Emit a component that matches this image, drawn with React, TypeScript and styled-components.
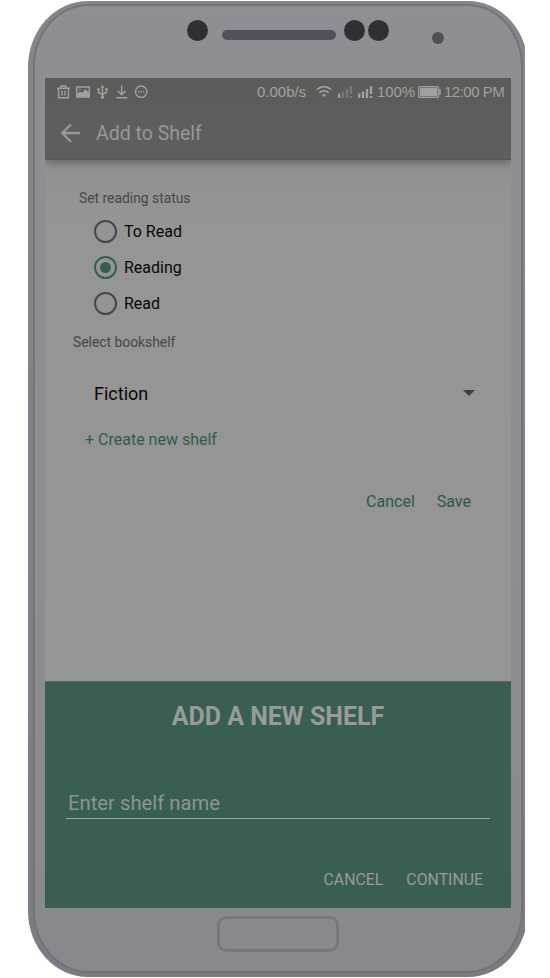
import React, { useState } from "react";
import styled, { createGlobalStyle } from "styled-components";

const GlobalStyle = createGlobalStyle`
  * {
    box-sizing: border-box;
  }

  body {
    margin: 0;
    background-color: #ffffff;
    font-family: Roboto, sans-serif;
  }

  button {
    border: 0;
    padding: 0;
    background: none;
    font-family: inherit;
    cursor: pointer;
  }
`;

const Stage = styled.main`
  height: 978px;
  width: 525px;
  padding: 1px 0 1px 28px;
  overflow: hidden;
`;

const Phone = styled.div`
  width: 500px;
  height: 976px;
  padding: 3px 5px 4px;
  border-radius: 60px / 66px;
  background: linear-gradient(#85868a, #818289 50%, #7b7c83);
`;

const Face = styled.div`
  display: flex;
  flex-direction: column;
  height: 969px;
  padding: 0 10px;
  border: 2px solid #737479;
  border-radius: 56px / 62px;
  background: linear-gradient(#8e8f94, #8d8e94 50%, #88898d);
`;

const Hardware = styled.div`
  display: flex;
  height: 72px;
  padding: 14px 0 0 142px;
`;

const Lens = styled.span<{ $gap?: number }>`
  width: 21px;
  height: 21px;
  margin-left: ${(props) => props.$gap || 0}px;
  border-radius: 50%;
  background-color: #2f3036;
`;

const Speaker = styled.span`
  width: 114px;
  height: 10px;
  margin: 10px 0 0 14px;
  border-radius: 5px;
  background-color: #50515a;
`;

const Sensor = styled.span`
  width: 12px;
  height: 12px;
  margin: 12px 0 0 43px;
  border-radius: 50%;
  background-color: #4f5056;
`;

const Screen = styled.div`
  display: flex;
  flex-direction: column;
  width: 466px;
  height: 830px;
  background-color: #959595;
`;

const TopArea = styled.header`
  height: 82px;
  z-index: 1;
  background: linear-gradient(#5c5c5a, #5c5c5a 26px, #5e5e5e 27px);
  border-bottom: 1px solid #565656;
  box-shadow: 0 3px 8px rgba(0, 0, 0, 0.3);
  clip-path: inset(0 0 -14px 0);
`;

const StatusBar = styled.div`
  display: flex;
  align-items: center;
  height: 27px;
  padding: 0 7px 0 11px;
  color: #a0a09f;
  font-family: "Liberation Sans", Arial, sans-serif;
  font-size: 15px;
`;

const StatusText = styled.span<{
  $width: number;
  $left?: number;
  $spacing?: number;
}>`
  width: ${(props) => props.$width}px;
  margin-left: ${(props) => props.$left || 0}px;
  letter-spacing: ${(props) => props.$spacing || 0}px;
  white-space: nowrap;
`;

const Toolbar = styled.div`
  display: flex;
  align-items: center;
  height: 54px;
  padding: 1px 0 0 15px;
`;

const BackButton = styled.button`
  width: 22px;
  height: 22px;
  margin-right: 14px;
`;

const Title = styled.h1`
  margin: 0;
  padding-top: 2px;
  color: #989898;
  font-size: 19.5px;
  font-weight: 400;
`;

const Content = styled.section`
  height: 521px;
  padding: 28px 0 0 28px;
  background: linear-gradient(#919191, #959595 60px);
`;

const Label = styled.div<{ $left: number }>`
  height: 20px;
  padding-left: ${(props) => props.$left}px;
  color: #474747;
  font-size: 13.85px;
  line-height: 20px;
`;

const RadioGroup = styled.div`
  display: grid;
  grid-auto-rows: 36.3px;
  height: 124px;
  padding: 5px 0 0 21px;
`;

const RadioRow = styled.label`
  display: flex;
  align-items: center;
  gap: 7px;
  color: #080808;
  font-size: 16px;
  cursor: pointer;
`;

const RadioInput = styled.input`
  display: grid;
  place-items: center;
  width: 23px;
  height: 23px;
  margin: 0;
  appearance: none;
  border: 2px solid #474747;
  border-radius: 50%;

  &:checked {
    border-color: #33614f;
  }

  &:checked::before {
    content: "";
    width: 11px;
    height: 11px;
    border-radius: 50%;
    background-color: #33614f;
  }
`;

const Select = styled.div`
  display: flex;
  justify-content: space-between;
  align-items: center;
  height: 40px;
  margin-top: 21px;
  padding: 0 36px 0 21px;
  color: #080808;
  font-size: 18px;
`;

const Caret = styled.span`
  border: 6px solid transparent;
  border-top-color: #404040;
  border-bottom: 0;
`;

const Create = styled.button`
  display: block;
  height: 24px;
  margin: 14px 0 0 12px;
  color: #2f5d4c;
  font-size: 16px;
`;

const Actions = styled.div<{ $light?: boolean }>`
  display: flex;
  justify-content: flex-end;
  gap: ${(props) => (props.$light ? 23 : 22)}px;
  margin-top: ${(props) => (props.$light ? 48 : 38)}px;
  padding-right: ${(props) => (props.$light ? 7 : 40)}px;

  button {
    height: 24px;
    color: ${(props) => (props.$light ? "#999b9a" : "#2b5a49")};
    font-size: ${(props) => (props.$light ? 15.85 : 16)}px;
  }
`;

const Sheet = styled.section`
  height: 227px;
  padding: 18px 21px 0;
  border-top: 1px solid #4b6d62;
  background-color: #395e52;
`;

const SheetTitle = styled.h2`
  height: 34px;
  margin: 0;
  color: #999b9a;
  font-size: 25px;
  font-weight: 700;
  line-height: 34px;
  text-align: center;
`;

const NameInput = styled.input`
  display: block;
  width: 424px;
  height: 33px;
  margin-top: 52px;
  padding: 1px 2px 0;
  border: 0;
  border-bottom: 1px solid #9da8a3;
  outline: 0;
  background: transparent;
  color: #999b9a;
  font-family: Roboto, sans-serif;
  font-size: 20.25px;

  &::placeholder {
    color: #8d9592;
  }
`;

const HomeButton = styled.div`
  width: 122px;
  height: 36px;
  margin: 8px 0 0 172px;
  border: 3px solid #77787b;
  border-radius: 9px;
`;

const Icon = styled.svg<{ $left?: number }>`
  display: block;
  flex-shrink: 0;
  margin-left: ${(props) => props.$left || 0}px;
  fill: none;
  stroke: #a0a09f;
`;

function NotificationIcons() {
  return (
    <Icon width="98" height="18" viewBox="0 0 98 18" strokeWidth="1.4">
      <path d="M1 5.2h13M5 5V3h5v2M2.6 5.5v9.2h9.8V5.5M6 7.5v5M9 7.5v5" />
      <path d="M20.7 4h12.6v10H20.7z" />
      <path d="M21 14v-3l3-2.5 2 1.5 3.5-4 1.5 2 2 1.5V14z" fill="#a0a09f" stroke="none" />
      <circle cx="24" cy="6.5" r=".8" fill="#a0a09f" stroke="none" />
      <path d="M46.5 3v11M42.5 6v3.5l4 2 4-2V6" />
      <path d="M44.7 4.5l1.8-2.5 1.8 2.5zM41.3 5.2h2.4v2h-2.4zM49.3 5.2h2.4v2h-2.4z" fill="#a0a09f" stroke="none" />
      <circle cx="46.5" cy="14.2" r="1.6" fill="#a0a09f" stroke="none" />
      <path d="M65.7 2.5v9M61.7 7.7l4 4 4-4M60.3 14.7h11" />
      <circle cx="85.2" cy="8.7" r="5.7" />
      <path d="M82 8.7h6.5" strokeDasharray="1.4 1" />
    </Icon>
  );
}

function WifiIcon() {
  return (
    <Icon width="16" height="13" viewBox="0 0 16 13" $left={9}>
      <path d="M.8 4.6q7.2-6 14.4 0M3.4 7.5q4.6-3.6 9.2 0" strokeWidth="1.6" />
      <path d="M5.8 9.7q2.2-1.4 4.4 0L8 12z" fill="#a0a09f" stroke="none" />
    </Icon>
  );
}

function SignalIcon({ left, dim }: { left: number; dim?: boolean }) {
  return (
    <Icon width="15" height="12" viewBox="0 0 15 12" $left={left} strokeWidth="2.3">
      <path d="M1.2 7.5V12" />
      <path d="M5 5.5V12M9 3V12M13 0v8M13 10v2" opacity={dim ? 0.45 : 1} />
    </Icon>
  );
}

function BatteryIcon() {
  return (
    <Icon width="23" height="12" viewBox="0 0 23 12" $left={3}>
      <rect x=".6" y=".6" width="20" height="10.8" rx="1" strokeWidth="1.1" />
      <path d="M1.8 1.8h17.6v8.4H1.8zM21.3 3h1.4v6h-1.4z" fill="#a0a09f" stroke="none" />
    </Icon>
  );
}

const statuses = ["To Read", "Reading", "Read"];

function App() {
  const [status, setStatus] = useState("Reading");
  const [name, setName] = useState("");

  return (
    <>
      <GlobalStyle />
      <Stage>
        <Phone>
          <Face>
            <Hardware>
              <Lens />
              <Speaker />
              <Lens $gap={8} />
              <Lens $gap={3} />
              <Sensor />
            </Hardware>
            <Screen>
              <TopArea>
                <StatusBar>
                  <NotificationIcons />
                  <StatusText $width={50} $left={103}>0.00b/s</StatusText>
                  <WifiIcon />
                  <SignalIcon left={6} dim />
                  <SignalIcon left={5} />
                  <StatusText $width={38} $left={4} $spacing={-0.1}>100%</StatusText>
                  <BatteryIcon />
                  <StatusText $width={60} $left={3} $spacing={-0.5}>12:00 PM</StatusText>
                </StatusBar>
                <Toolbar>
                  <BackButton aria-label="Back">
                    <Icon width="22" height="22" viewBox="0 0 22 22">
                      <path d="M20 11H3M11 2.3L2.3 11l8.7 8.7" stroke="#989898" strokeWidth="2.3" />
                    </Icon>
                  </BackButton>
                  <Title>Add to Shelf</Title>
                </Toolbar>
              </TopArea>
              <Content>
                <Label $left={6}>Set reading status</Label>
                <RadioGroup>
                  {statuses.map((item) => (
                    <RadioRow key={item}>
                      <RadioInput
                        type="radio"
                        name="status"
                        checked={status === item}
                        onChange={() => setStatus(item)}
                      />
                      {item}
                    </RadioRow>
                  ))}
                </RadioGroup>
                <Label $left={0}>Select bookshelf</Label>
                <Select>
                  Fiction
                  <Caret />
                </Select>
                <Create>+ Create new shelf</Create>
                <Actions>
                  <button>Cancel</button>
                  <button>Save</button>
                </Actions>
              </Content>
              <Sheet>
                <SheetTitle>ADD A NEW SHELF</SheetTitle>
                <NameInput
                  placeholder="Enter shelf name"
                  value={name}
                  onChange={(e) => setName(e.target.value)}
                />
                <Actions $light>
                  <button>CANCEL</button>
                  <button>CONTINUE</button>
                </Actions>
              </Sheet>
            </Screen>
            <HomeButton />
          </Face>
        </Phone>
      </Stage>
    </>
  );
}

export default App;
